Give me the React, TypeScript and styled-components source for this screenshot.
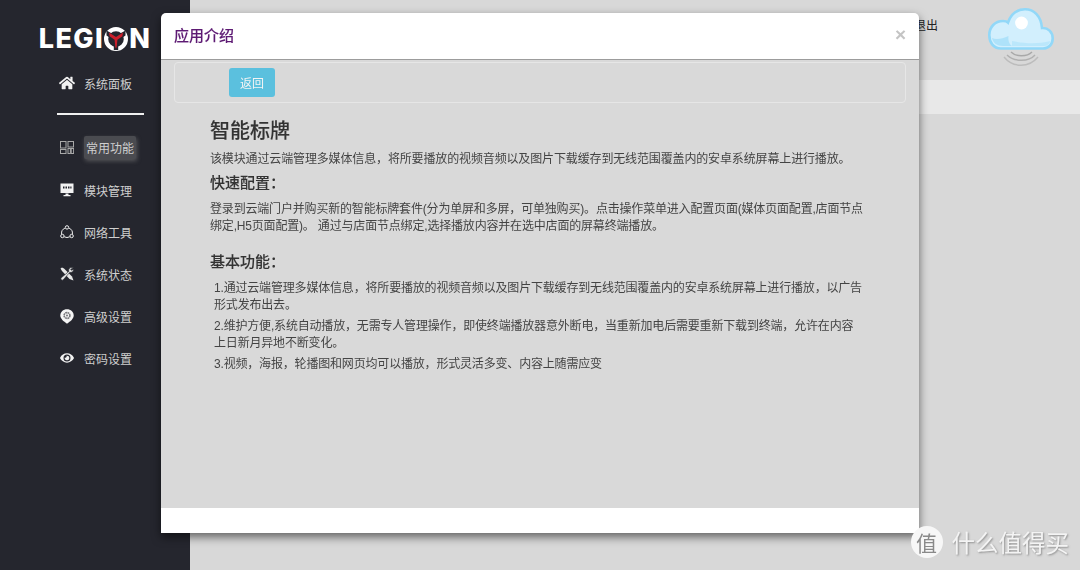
import React from 'react'
import styled, { createGlobalStyle } from 'styled-components'
import { FaHome, FaEye } from 'react-icons/fa'

const GlobalStyle = createGlobalStyle`
  html, body {
    margin: 0;
    padding: 0;
    height: 570px;
    overflow: hidden;
    font-family: "Liberation Sans", "Noto Sans CJK SC", sans-serif;
  }
  * { box-sizing: border-box; }
`

const Page = styled.div`
  display: flex;
  width: 1080px;
  height: 570px;
  background: #d8d8d8;
  overflow: hidden;
`

const Sidebar = styled.aside`
  flex: 0 0 190px;
  display: flex;
  flex-direction: column;
  align-items: center;
  padding-top: 27px;
  background: #25262e;
  color: #cfcfcf;
`

const Logo = styled.div`
  display: flex;
  align-items: center;
  height: 24px;
  margin-bottom: 20px;
  font-family: "Inter", sans-serif;
  font-weight: 800;
  font-size: 27px;
  letter-spacing: 1.4px;
  line-height: 24px;
  color: #fff;
  svg { margin: 0 1px 0 0; }
`

const NavList = styled.ul`
  list-style: none;
  margin: 0;
  padding: 0;
  width: 100%;
`

const NavItem = styled.li<{ $active?: boolean }>`
  display: flex;
  align-items: center;
  height: 42px;
  margin-bottom: ${p => (p.$active ? '1px' : '0')};
  padding-left: 59px;
  font-size: 12px;
  &:first-child { height: 24px; }
`

const NavIcon = styled.span`
  display: flex;
  justify-content: center;
  width: 16px;
  margin-right: 9px;
  color: #f2f2f2;
`

const NavLabel = styled.span<{ $active?: boolean }>`
  padding: ${p => (p.$active ? '3px 2px' : '0')};
  border-radius: 2px;
  background: ${p => (p.$active ? '#4a4b50' : 'transparent')};
  box-shadow: ${p => (p.$active ? '1px 2px 4px rgba(120, 120, 120, 0.6)' : 'none')};
`

const Divider = styled.li`
  width: 87px;
  height: 2px;
  margin: 18px 0 11px 57px;
  background: #f0f0f0;
`

const Main = styled.main`
  flex: 1;
  display: flex;
  flex-direction: column;
`

const TopBar = styled.header`
  display: flex;
  justify-content: flex-end;
  align-items: flex-start;
  height: 80px;
  padding: 8px 26px 0 0;
  font-size: 12px;
  color: #222;
`

const Logout = styled.span`
  margin: 8px 50px 0 0;
`

const Band = styled.div`
  height: 34px;
  background: #e8e8e8;
`

const Modal = styled.section`
  position: fixed;
  top: 13px;
  left: 161px;
  display: flex;
  flex-direction: column;
  width: 758px;
  height: 520px;
  border-radius: 5px 5px 0 0;
  background: #fff;
  box-shadow: 0 4px 10px rgba(0, 0, 0, 0.55);
  overflow: hidden;
`

const ModalHeader = styled.div`
  display: flex;
  justify-content: space-between;
  align-items: center;
  flex: 0 0 47px;
  padding: 0 13px 3px;
  border-bottom: 1px solid #9c9c9c;
`

const ModalTitle = styled.h4`
  margin: 0;
  font-size: 15px;
  font-weight: 500;
  color: #5d1a73;
  -webkit-text-stroke: 0.1px #5d1a73;
`

const Close = styled.span`
  font-size: 19px;
  font-weight: 700;
  color: #c4c4c4;
`

const ModalBody = styled.div`
  flex: 1;
  padding: 2px 13px 0;
  background: #d9d9d9;
  color: #444;
`

const ToolPanel = styled.div`
  display: flex;
  align-items: center;
  height: 41px;
  padding-left: 54px;
  border: 1px solid #e6e6e6;
  border-radius: 4px;
`

const BackButton = styled.button`
  width: 46px;
  height: 29px;
  border: 0;
  border-radius: 3px;
  background: #5bc0de;
  color: #f4f4f4;
  font: inherit;
  font-size: 12px;
`

const Article = styled.article`
  padding: 15px 42px 0 36px;
`

const Heading = styled.h2`
  margin: 0 0 5px;
  font-size: 20px;
  line-height: 26px;
  font-weight: 500;
  color: #333;
  -webkit-text-stroke: 0.1px #333;
`

const Intro = styled.p`
  margin: 0;
  font-size: 12px;
  line-height: 20px;
  letter-spacing: -0.14px;
`

const SubHeading = styled.h3<{ $spaced?: boolean }>`
  margin: ${p => (p.$spaced ? '17px' : '4px')} 0 8px;
  font-size: 15px;
  line-height: 20px;
  font-weight: 500;
  color: #333;
  -webkit-text-stroke: 0.1px #333;
`

const Para = styled.p<{ $indent?: boolean }>`
  margin: 0 0 ${p => (p.$indent ? '4px' : '0')};
  padding-left: ${p => (p.$indent ? '4px' : '0')};
  font-size: 12px;
  line-height: 17px;
  letter-spacing: -0.18px;
`

const ModalFooter = styled.div`
  flex: 0 0 25px;
  background: #fff;
`

const Watermark = styled.div`
  position: fixed;
  right: 11px;
  bottom: 11px;
  display: flex;
  align-items: center;
  gap: 9px;
  font-size: 23.5px;
  color: #f4f4f4;
  text-shadow: 1px 1px 2px rgba(110, 110, 110, 0.7);
`

const Badge = styled.span`
  display: flex;
  justify-content: center;
  align-items: center;
  width: 32px;
  height: 32px;
  border-radius: 50%;
  background: #f7f7f7;
  color: #8a8a8a;
  font-size: 21px;
  text-shadow: none;
`

const GridIcon = () => (
  <svg width="14" height="13" viewBox="0 0 14 13" fill="none" stroke="#a8a8a8" strokeWidth="1">
    <rect x="0.5" y="0.5" width="5.5" height="6.5" />
    <rect x="0.5" y="8.5" width="5.5" height="4" />
    <rect x="8" y="0.5" width="5.5" height="5.5" />
    <rect x="8" y="7.5" width="2.4" height="5" />
    <rect x="11.2" y="7.5" width="2.4" height="5" />
  </svg>
)

const MonitorIcon = () => (
  <svg width="14" height="14" viewBox="0 0 14 14">
    <rect x="0.5" y="0.5" width="13" height="9.5" fill="#f2f2f2" />
    <path d="M3 3.5h1.5v2H3zM5.5 3.5H7v2H5.5zM8 3.5h1.5v2H8zM10.3 3.5h1.2v2h-1.2z" fill="#25262e" />
    <path d="M5.5 10.5h3V12h2v1.2h-7V12h2z" fill="#f2f2f2" />
  </svg>
)

const NetworkIcon = () => (
  <svg width="14" height="14" viewBox="0 0 14 14" fill="none" stroke="#f2f2f2" strokeWidth="1">
    <circle cx="7" cy="2.4" r="1.7" />
    <circle cx="2.4" cy="11" r="1.7" />
    <circle cx="11.6" cy="11" r="1.7" />
    <path d="M4.9 3.2A5.5 5.5 0 0 0 1.6 9M9.1 3.2A5.5 5.5 0 0 1 12.4 9M4.2 11.8a6 6 0 0 0 5.6 0" />
  </svg>
)

const ToolsIcon = () => (
  <svg width="14" height="14" viewBox="0 0 14 14" fill="#e8e8e8">
    <path d="M0.5 1.5 L2 0.5 L4 1.5 L12 9.5 L13.5 13.5 L9.5 12 L2 4 Z" />
    <path d="M13.5 0.8 L10 0.6 L8.5 3 L9 4.3 L1 11 A1.5 1.5 0 0 0 3 13 L9.8 5.3 L11 5.5 L13 4.5 L13.7 2.2 L11.5 3.2 L10.6 2.4 Z" stroke="#25262e" strokeWidth="0.6" />
  </svg>
)

const PinGearIcon = () => (
  <svg width="14" height="15" viewBox="0 0 14 15">
    <path d="M7 0.3C10.8 0.3 13.7 3 13.7 6.6C13.7 9.8 10.5 12.4 7 14.8C3.5 12.4 0.3 9.8 0.3 6.6C0.3 3 3.2 0.3 7 0.3Z" fill="#f5f5f5" />
    <circle cx="7" cy="6.5" r="2.9" fill="none" stroke="#77777b" strokeWidth="1.6" strokeDasharray="1.8 0.5" />
    <circle cx="7" cy="6.5" r="1" fill="#77777b" />
  </svg>
)

const LegionMark = () => (
  <svg width="24" height="24" viewBox="0 0 24 24">
    <circle cx="12" cy="12" r="9.9" fill="none" stroke="#fff" strokeWidth="4.2" />
    <path d="M2.5 3.5 L12 8.8 L21.5 3.5 L21.5 8.5 L14.2 13.5 L14.2 23 L9.8 23 L9.8 13.5 L2.5 8.5 Z" fill="#25262e" />
    <path d="M5 5.6 L12 10 L19 5.6 L18.4 9.2 L13.4 12.8 L12.6 20.8 L11.4 20.8 L10.6 12.8 L5.6 9.2 Z" fill="#cc1f2b" />
  </svg>
)

const CloudIcon = () => (
  <svg width="66" height="59" viewBox="0 0 66 59" fill="none">
    <path
      d="M13 40.5 C5 40.5 1.3 34 1.3 27 C1.3 19 7 13 15 13 C17 13 19 13.5 20 14.5 C23 6 29 1.3 37 1.3 C46 1.3 53 8 54 20 C60 19.5 64.7 24 64.7 30.5 C64.7 36.5 60.5 40.5 55 40.5 Z"
      fill="#d2effd"
      stroke="#92d8f8"
      strokeWidth="2.6"
    />
    <path d="M4 30 C5 35 9 38 15 38 H24 C21 36 20 32 20.5 28 C14 31 8 32 4 30 Z" fill="#aee2fa" />
    <path d="M24 38 H56 C59 38 61.5 36 62.5 33 C50 36 38 36 24 33 Z" fill="#bbe7fb" />
    <circle cx="33.5" cy="15" r="6.4" fill="#fff" />
    <path d="M23 44 C28 49 39 49 44 44" stroke="#a8a8a8" strokeWidth="1.4" />
    <path d="M19 47 C26 54 41 54 47 47" stroke="#b0b0b0" strokeWidth="1.4" />
    <path d="M16 49 C25 60 41 60 50 49" stroke="#bcbcbc" strokeWidth="1.4" />
  </svg>
)

const App: React.FC = () => {
  return (
    <Page>
      <GlobalStyle />
      <Sidebar>
        <Logo>
          LEGI
          <LegionMark />
          N
        </Logo>
        <NavList>
          <NavItem>
            <NavIcon><FaHome size={16} /></NavIcon>
            <NavLabel>系统面板</NavLabel>
          </NavItem>
          <Divider />
          <NavItem $active>
            <NavIcon><GridIcon /></NavIcon>
            <NavLabel $active>常用功能</NavLabel>
          </NavItem>
          <NavItem>
            <NavIcon><MonitorIcon /></NavIcon>
            <NavLabel>模块管理</NavLabel>
          </NavItem>
          <NavItem>
            <NavIcon><NetworkIcon /></NavIcon>
            <NavLabel>网络工具</NavLabel>
          </NavItem>
          <NavItem>
            <NavIcon><ToolsIcon /></NavIcon>
            <NavLabel>系统状态</NavLabel>
          </NavItem>
          <NavItem>
            <NavIcon><PinGearIcon /></NavIcon>
            <NavLabel>高级设置</NavLabel>
          </NavItem>
          <NavItem>
            <NavIcon><FaEye size={14} /></NavIcon>
            <NavLabel>密码设置</NavLabel>
          </NavItem>
        </NavList>
      </Sidebar>
      <Main>
        <TopBar>
          <Logout>退出</Logout>
          <CloudIcon />
        </TopBar>
        <Band />
      </Main>
      <Modal>
        <ModalHeader>
          <ModalTitle>应用介绍</ModalTitle>
          <Close>×</Close>
        </ModalHeader>
        <ModalBody>
          <ToolPanel>
            <BackButton>返回</BackButton>
          </ToolPanel>
          <Article>
            <Heading>智能标牌</Heading>
            <Intro>该模块通过云端管理多媒体信息，将所要播放的视频音频以及图片下载缓存到无线范围覆盖内的安卓系统屏幕上进行播放。</Intro>
            <SubHeading>快速配置：</SubHeading>
            <Para>登录到云端门户并购买新的智能标牌套件(分为单屏和多屏，可单独购买)。点击操作菜单进入配置页面(媒体页面配置,店面节点绑定,H5页面配置)。 通过与店面节点绑定,选择播放内容并在选中店面的屏幕终端播放。</Para>
            <SubHeading $spaced>基本功能：</SubHeading>
            <Para $indent>1.通过云端管理多媒体信息，将所要播放的视频音频以及图片下载缓存到无线范围覆盖内的安卓系统屏幕上进行播放，以广告形式发布出去。</Para>
            <Para $indent>2.维护方便,系统自动播放，无需专人管理操作，即使终端播放器意外断电，当重新加电后需要重新下载到终端，允许在内容上日新月异地不断变化。</Para>
            <Para $indent>3.视频，海报，轮播图和网页均可以播放，形式灵活多变、内容上随需应变</Para>
          </Article>
        </ModalBody>
        <ModalFooter />
      </Modal>
      <Watermark>
        <Badge>值</Badge>
        什么值得买
      </Watermark>
    </Page>
  )
}

export default App
